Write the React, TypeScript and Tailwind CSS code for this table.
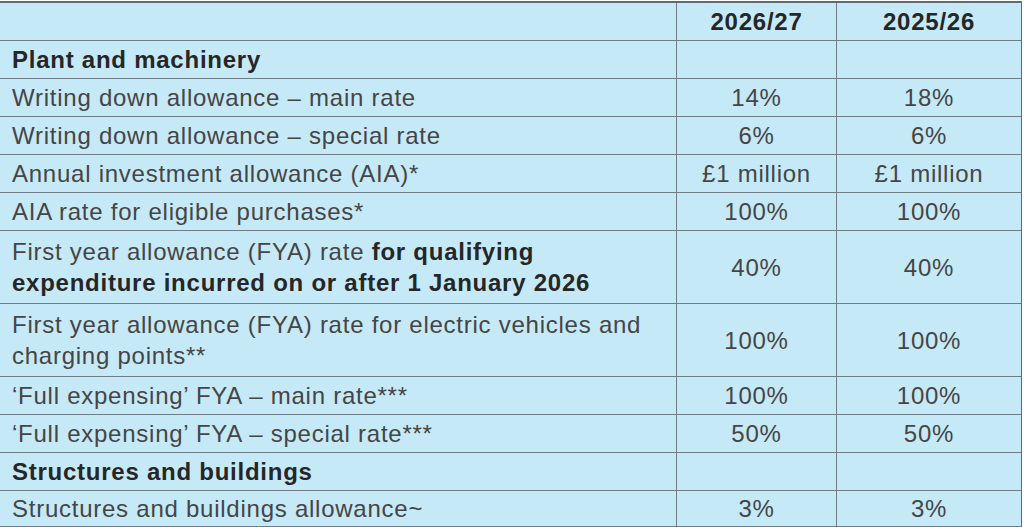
import type { ReactNode } from "react";

type Row = {
  label: ReactNode;
  a?: string;
  b?: string;
  heading?: boolean;
  height: string;
};

const ROWS: Row[] = [
  { label: "Plant and machinery", heading: true, height: "h-[37px]" },
  { label: "Writing down allowance – main rate", a: "14%", b: "18%", height: "h-[37px]" },
  { label: "Writing down allowance – special rate", a: "6%", b: "6%", height: "h-[37px]" },
  { label: "Annual investment allowance (AIA)*", a: "£1 million", b: "£1 million", height: "h-[37px]" },
  { label: "AIA rate for eligible purchases*", a: "100%", b: "100%", height: "h-[37px]" },
  {
    label: (
      <>
        First year allowance (FYA) rate{" "}
        <span className="font-bold text-[#262626]">
          for qualifying
          <br />
          expenditure incurred on or after 1 January 2026
        </span>
      </>
    ),
    a: "40%",
    b: "40%",
    height: "h-[72px]",
  },
  {
    label: (
      <>
        First year allowance (FYA) rate for electric vehicles and
        <br />
        charging points**
      </>
    ),
    a: "100%",
    b: "100%",
    height: "h-[72px]",
  },
  { label: "‘Full expensing’ FYA – main rate***", a: "100%", b: "100%", height: "h-[37px]" },
  { label: "‘Full expensing’ FYA – special rate***", a: "50%", b: "50%", height: "h-[37px]" },
  { label: "Structures and buildings", heading: true, height: "h-[37px]" },
  { label: "Structures and buildings allowance~", a: "3%", b: "3%", height: "h-[35px]" },
];

function TableRow({ row }: { row: Row }) {
  return (
    <div className="grid grid-cols-[676px_160px_185px] border-b border-[#6f7d86]">
      <div
        className={`flex items-center pl-3 ${row.height} ${
          row.heading ? "font-bold text-[#262626]" : "text-[#454545]"
        }`}
      >
        <span>{row.label}</span>
      </div>
      <div className="flex items-center justify-center border-l border-[#6f7d86] text-[#454545]">
        {row.a}
      </div>
      <div className="flex items-center justify-center border-l border-[#6f7d86] text-[#454545]">
        {row.b}
      </div>
    </div>
  );
}

export default function App() {
  return (
    <div
      className="h-[527px] w-[1024px] overflow-hidden bg-white pt-px text-[24px] leading-[31px] tracking-[0.75px]"
      style={{ fontFamily: '"Liberation Sans", Arial, sans-serif' }}
    >
      <div className="w-[1022px] border-t-2 border-r border-[#5f6b73] bg-[#c6e9f8]">
        <div className="grid grid-cols-[676px_160px_185px] border-b border-[#6f7d86] font-bold text-[#262626]">
          <div className="h-[37px]" />
          <div className="flex items-center justify-center border-l border-[#6f7d86]">
            2026/27
          </div>
          <div className="flex items-center justify-center border-l border-[#6f7d86]">
            2025/26
          </div>
        </div>
        {ROWS.map((row, i) => (
          <TableRow key={i} row={row} />
        ))}
      </div>
    </div>
  );
}
